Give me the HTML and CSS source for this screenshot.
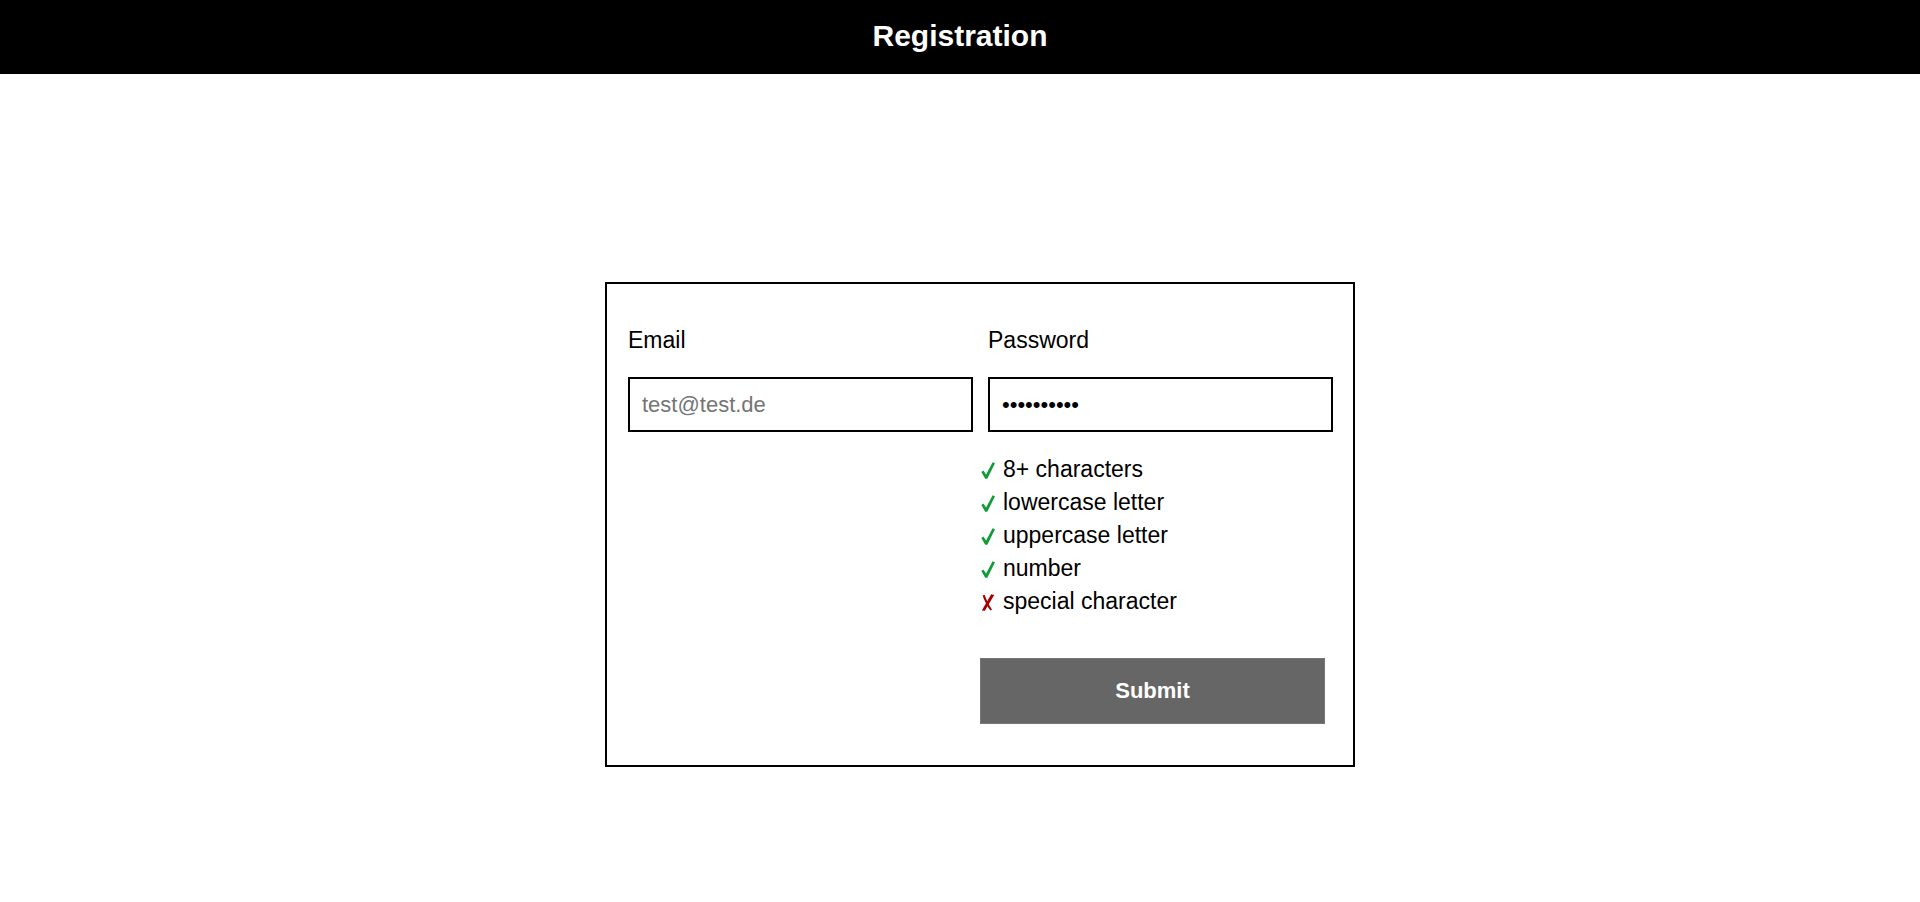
FILE: index.html
```html
<!DOCTYPE html>
<html lang="en">
<head>
<meta charset="utf-8">
<title>Registration</title>
<link rel="stylesheet" href="styles.css">
</head>
<body>
<header class="topbar">
  <h1 class="topbar-title">Registration</h1>
</header>
<main class="page">
  <form class="card" onsubmit="return false">
    <div class="field">
      <label class="field-label" for="email">Email</label>
      <input class="field-input" id="email" type="email" placeholder="test@test.de">
    </div>
    <div class="field">
      <label class="field-label" for="password">Password</label>
      <input class="field-input" id="password" type="password" value="abcdefghij">
    </div>
    <div class="spacer"></div>
    <div class="side">
      <ul class="rules">
        <li class="rule"><span class="mark mark-ok"><svg class="mark-icon" viewBox="0 0 14 17" width="14" height="17"><polygon points="0.3,10 2.3,8.6 5.1,12.6 11.6,0.2 14,1.3 6.3,16.8 4.2,16.8"/></svg></span>8+ characters</li>
        <li class="rule"><span class="mark mark-ok"><svg class="mark-icon" viewBox="0 0 14 17" width="14" height="17"><polygon points="0.3,10 2.3,8.6 5.1,12.6 11.6,0.2 14,1.3 6.3,16.8 4.2,16.8"/></svg></span>lowercase letter</li>
        <li class="rule"><span class="mark mark-ok"><svg class="mark-icon" viewBox="0 0 14 17" width="14" height="17"><polygon points="0.3,10 2.3,8.6 5.1,12.6 11.6,0.2 14,1.3 6.3,16.8 4.2,16.8"/></svg></span>uppercase letter</li>
        <li class="rule"><span class="mark mark-ok"><svg class="mark-icon" viewBox="0 0 14 17" width="14" height="17"><polygon points="0.3,10 2.3,8.6 5.1,12.6 11.6,0.2 14,1.3 6.3,16.8 4.2,16.8"/></svg></span>number</li>
        <li class="rule"><span class="mark mark-bad"><svg class="mark-icon" viewBox="0 0 14 17" width="14" height="17"><path d="M10.2,0.3 L13.2,0.9 L3.9,16.8 L0.8,16.6 Z"/><path d="M1.6,1.4 L3.6,0.8 C5.4,6 7.8,11 11,15.6 L9.4,16.6 C6.2,12 3.4,6.8 1.6,1.4 Z"/></svg></span>special character</li>
      </ul>
      <button class="submit" type="submit">Submit</button>
    </div>
  </form>
</main>
</body>
</html>
```

FILE: styles.css
```css
html, body {
  margin: 0;
  padding: 0;
  background: #fff;
  font-family: "Liberation Sans", Arial, sans-serif;
  color: #000;
}

.topbar {
  background: #000;
  height: 74px;
  box-sizing: border-box;
  padding-bottom: 2px;
}

.topbar-title {
  margin: 0;
  text-align: center;
  color: #fff;
  font-size: 30px;
  font-weight: bold;
  line-height: 72px;
}

.page {
  display: flex;
  justify-content: center;
  padding: 208px 0 0 40px;
}

.card {
  width: 750px;
  box-sizing: border-box;
  border: 2px solid #000;
  padding: 43px 20px 41px 21px;
  display: grid;
  grid-template-columns: 345px 345px;
  column-gap: 15px;
}

.field {
  display: flex;
  flex-direction: column;
}

.field-label {
  font-size: 23px;
  line-height: 26px;
  margin-bottom: 24px;
}

.field-input {
  box-sizing: border-box;
  width: 345px;
  height: 55px;
  border: 2px solid #000;
  border-radius: 0;
  padding: 0 12px;
  margin: 0;
  font-family: "Liberation Sans", Arial, sans-serif;
  font-size: 22px;
  color: #000;
  outline: none;
  background: #fff;
}

.field-input::placeholder {
  color: #757575;
}

.side {
  margin-left: -8px;
  display: flex;
  flex-direction: column;
}

.rules {
  list-style: none;
  margin: 21px 0 0;
  padding: 0;
}

.rule {
  font-size: 23px;
  line-height: 33px;
  height: 33px;
  white-space: nowrap;
}

.mark {
  display: inline-block;
  width: 23px;
  line-height: 1;
  padding-left: 1px;
  box-sizing: border-box;
}

.mark-icon {
  display: inline-block;
  vertical-align: -2px;
  fill: currentColor;
}

.mark-ok {
  color: #119c3a;
}

.mark-bad {
  color: #a30000;
}

.submit {
  margin-top: 40px;
  width: 345px;
  height: 66px;
  box-sizing: border-box;
  background: #666;
  border: 1px solid #767676;
  border-radius: 0;
  color: #fff;
  font-family: "Liberation Sans", Arial, sans-serif;
  font-size: 22px;
  font-weight: bold;
  padding: 0;
  cursor: pointer;
}
```
